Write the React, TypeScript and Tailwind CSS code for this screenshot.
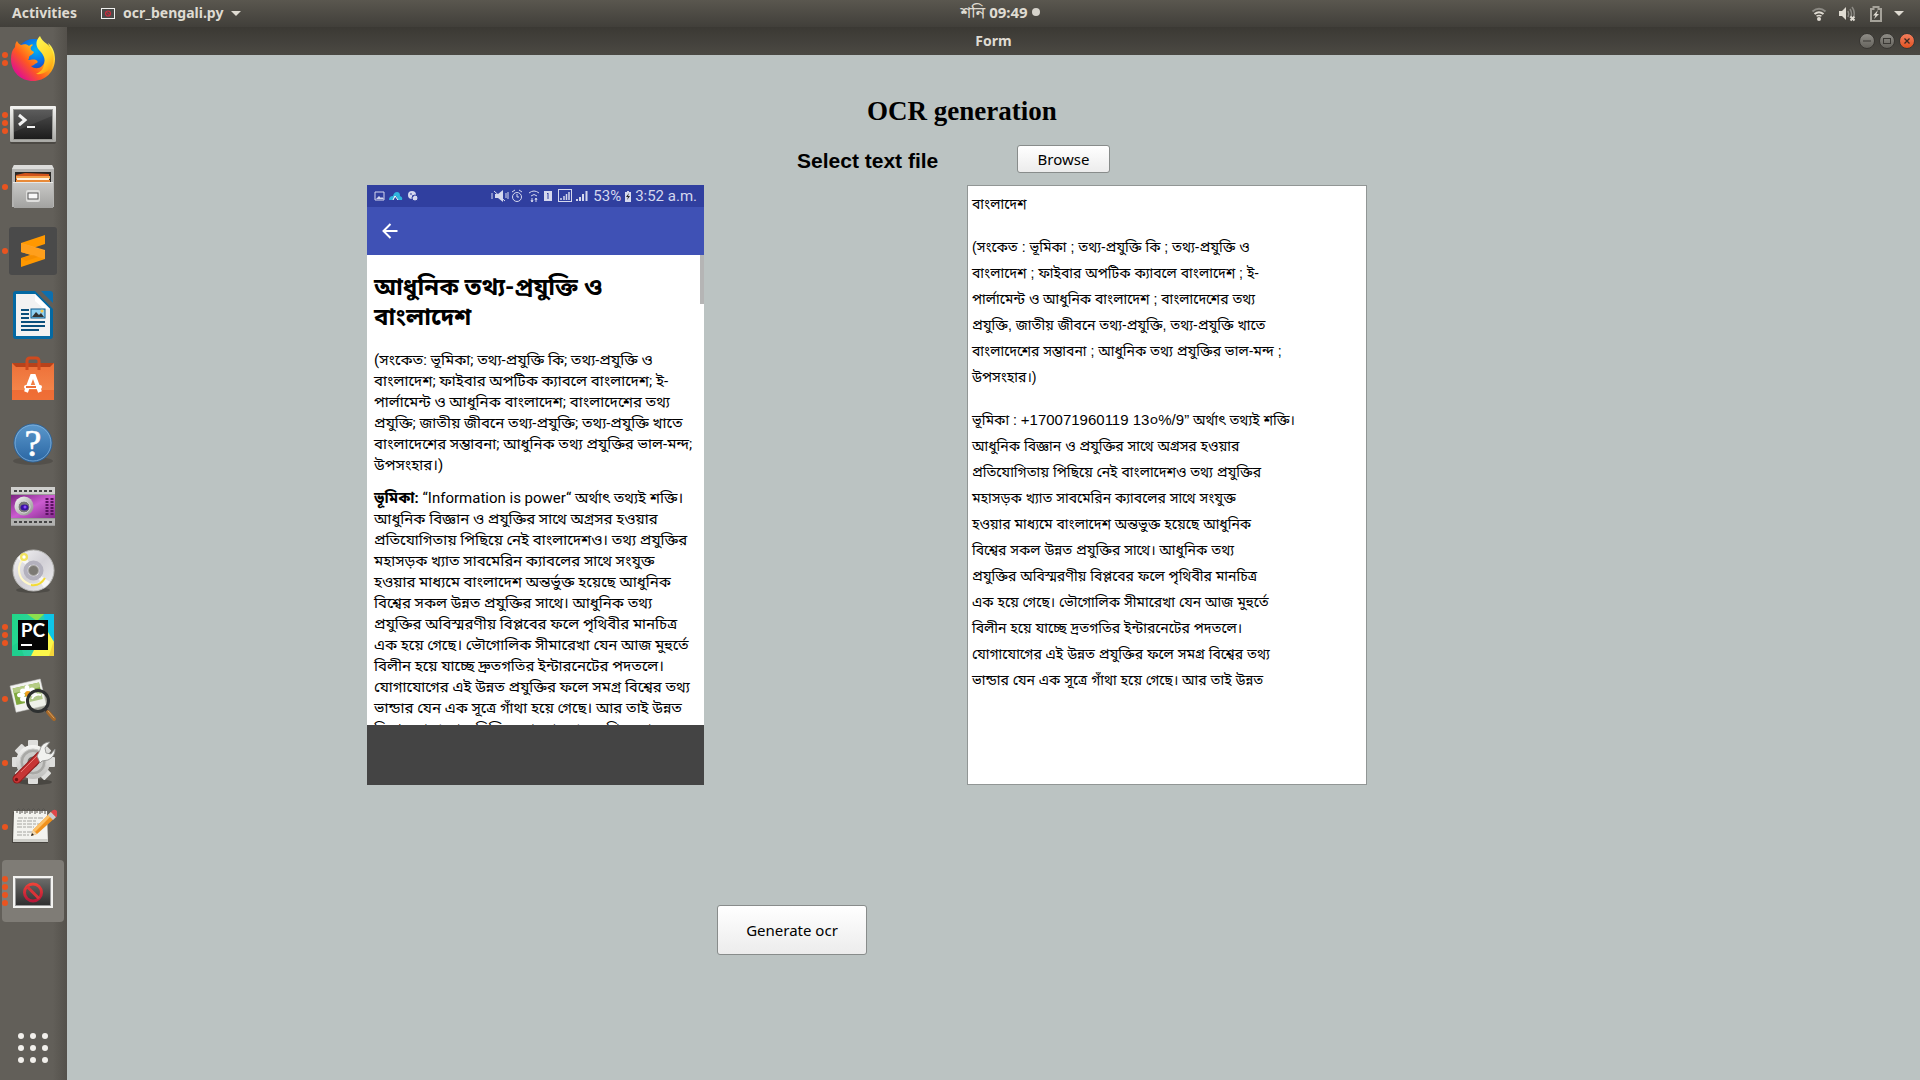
import type { ReactNode } from "react";

const outline = [
  "(সংকেত: ভূমিকা; তথ্য-প্রযুক্তি কি; তথ্য-প্রযুক্তি ও",
  "বাংলাদেশ; ফাইবার অপটিক ক্যাবলে বাংলাদেশ; ই-",
  "পার্লামেন্ট ও আধুনিক বাংলাদেশ; বাংলাদেশের তথ্য",
  "প্রযুক্তি; জাতীয় জীবনে তথ্য-প্রযুক্তি; তথ্য-প্রযুক্তি খাতে",
  "বাংলাদেশের সম্ভাবনা; আধুনিক তথ্য প্রযুক্তির ভাল-মন্দ;",
  "উপসংহার।)",
];

const essay = [
  "আধুনিক বিজ্ঞান ও প্রযুক্তির সাথে অগ্রসর হওয়ার",
  "প্রতিযোগিতায় পিছিয়ে নেই বাংলাদেশও। তথ্য প্রযুক্তির",
  "মহাসড়ক খ্যাত সাবমেরিন ক্যাবলের সাথে সংযুক্ত",
  "হওয়ার মাধ্যমে বাংলাদেশ অন্তর্ভুক্ত হয়েছে আধুনিক",
  "বিশ্বের সকল উন্নত প্রযুক্তির সাথে। আধুনিক তথ্য",
  "প্রযুক্তির অবিস্মরণীয় বিপ্লবের ফলে পৃথিবীর মানচিত্র",
  "এক হয়ে গেছে। ভৌগোলিক সীমারেখা যেন আজ মুহুর্তে",
  "বিলীন হয়ে যাচ্ছে দ্রুতগতির ইন্টারনেটের পদতলে।",
  "যোগাযোগের এই উন্নত প্রযুক্তির ফলে সমগ্র বিশ্বের তথ্য",
  "ভান্ডার যেন এক সূত্রে গাঁথা হয়ে গেছে। আর তাই উন্নত",
  "বিশ্বের সাথে তাল মিলিয়ে বাংলাদেশও এগিয়ে যাচ্ছে",
];

const resultParagraphs: ReactNode[][] = [
  ["বাংলাদেশ"],
  [
    "(সংকেত : ভূমিকা ; তথ্য-প্রযুক্তি কি ; তথ্য-প্রযুক্তি ও",
    "বাংলাদেশ ; ফাইবার অপটিক ক্যাবলে বাংলাদেশ ; ই-",
    "পার্লামেন্ট ও আধুনিক বাংলাদেশ ; বাংলাদেশের তথ্য",
    "প্রযুক্তি, জাতীয় জীবনে তথ্য-প্রযুক্তি, তথ্য-প্রযুক্তি খাতে",
    "বাংলাদেশের সম্ভাবনা ; আধুনিক তথ্য প্রযুক্তির ভাল-মন্দ ;",
    "উপসংহার।)",
  ],
  [
    <>
      ভূমিকা : <span className="text-[15px]">+170071960119 13০%/9”</span> অর্থাৎ তথ্যই শক্তি।
    </>,
    "আধুনিক বিজ্ঞান ও প্রযুক্তির সাথে অগ্রসর হওয়ার",
    "প্রতিযোগিতায় পিছিয়ে নেই বাংলাদেশও তথ্য প্রযুক্তির",
    "মহাসড়ক খ্যাত সাবমেরিন ক্যাবলের সাথে সংযুক্ত",
    "হওয়ার মাধ্যমে বাংলাদেশ অন্তভুক্ত হয়েছে আধুনিক",
    "বিশ্বের সকল উন্নত প্রযুক্তির সাথে। আধুনিক তথ্য",
    "প্রযুক্তির অবিস্মরণীয় বিপ্লবের ফলে পৃথিবীর মানচিত্র",
    "এক হয়ে গেছে। ভৌগোলিক সীমারেখা যেন আজ মুহুর্তে",
    "বিলীন হয়ে যাচ্ছে দ্রতগতির ইন্টারনেটের পদতলে।",
    "যোগাযোগের এই উন্নত প্রযুক্তির ফলে সমগ্র বিশ্বের তথ্য",
    "ভান্ডার যেন এক সূত্রে গাঁথা হয়ে গেছে। আর তাই উন্নত",
  ],
];

function Icon({ children }: { children: ReactNode }) {
  return (
    <svg viewBox="0 0 48 48" className="size-12" aria-hidden="true">
      {children}
    </svg>
  );
}

const firefox = (
  <Icon>
    <defs>
      <radialGradient id="ffGlobe" cx="0.55" cy="0.3" r="0.7">
        <stop offset="0" stopColor="#00b3f4" />
        <stop offset="0.5" stopColor="#0a6ee6" />
        <stop offset="1" stopColor="#312a9c" />
      </radialGradient>
      <linearGradient id="ffBody" x1="0.85" y1="0.1" x2="0.1" y2="0.75">
        <stop offset="0" stopColor="#fff44f" />
        <stop offset="0.35" stopColor="#ffa716" />
        <stop offset="0.65" stopColor="#ff5a1f" />
        <stop offset="1" stopColor="#e31587" />
      </linearGradient>
      <linearGradient id="ffTail" x1="0.3" y1="0" x2="0.7" y2="1">
        <stop offset="0" stopColor="#fff44f" />
        <stop offset="0.6" stopColor="#ffd52a" />
        <stop offset="1" stopColor="#ff980e" />
      </linearGradient>
    </defs>
    <circle cx="25" cy="22" r="18" fill="url(#ffGlobe)" />
    <path
      d="M6 12c0-3 1-5 2-6 1 2 2 3 4 4 3-1 6-1 8 1 1-1 3-2 4-1-2 1-3 3-2 5l3 2c-1 3-4 3-5 5 0 1 0 2-1 3 3 0 5-1 8 0 2 1 2 2 1 3-2 0-3 3-6 3 3 3 8 3 11 0 4-4 4-9 2-14 3 1 6 4 7 9 2-7-1-14-3-18 5 4 7 10 7 16 0 13-10 22-22 22S2 37 2 24c0-5 1-9 4-12z"
      fill="url(#ffBody)"
    />
    <path d="M31 1c-4 4-5 9-1 14 4 4 7 8 5 15-1 5-4 7-8 9 8 1 15-4 17-11 2-9-1-15-6-19-4-3-6-5-7-8z" fill="url(#ffTail)" />
  </Icon>
);

const terminal = (
  <Icon>
    <defs>
      <linearGradient id="termFrame" x1="0" y1="0" x2="0" y2="1">
        <stop offset="0" stopColor="#f4f4f2" />
        <stop offset="1" stopColor="#a9a9a5" />
      </linearGradient>
      <linearGradient id="termScreen" x1="0" y1="0" x2="0" y2="1">
        <stop offset="0" stopColor="#4e4e4e" />
        <stop offset="1" stopColor="#1c1c1c" />
      </linearGradient>
    </defs>
    <rect x="1" y="8" width="46" height="37" rx="2" fill="#3d3b37" opacity="0.6" />
    <rect x="1" y="7" width="46" height="36" rx="1" fill="url(#termFrame)" />
    <rect x="4" y="10" width="40" height="31" fill="#989894" />
    <rect x="5" y="11" width="38" height="29" fill="url(#termScreen)" />
    <path d="M5 11h38v6L5 33z" fill="#fff" opacity="0.08" />
    <path d="M10 16l6 5-6 5" fill="none" stroke="#f2f2f2" strokeWidth="3" />
    <rect x="18" y="27" width="8" height="2" fill="#f2f2f2" />
  </Icon>
);

const files = (
  <Icon>
    <defs>
      <linearGradient id="fileFront" x1="0" y1="0" x2="0" y2="1">
        <stop offset="0" stopColor="#c9c9c7" />
        <stop offset="1" stopColor="#a2a2a0" />
      </linearGradient>
    </defs>
    <path d="M5 2h38l2 4v38H3V6z" fill="#b4b4b2" />
    <path d="M5 2h38l2 4H3z" fill="#dcdcda" />
    <rect x="6" y="9" width="36" height="11" fill="#2b2926" />
    <path d="M7 12l9-2 24 1v9H7z" fill="#d2541c" />
    <rect x="7" y="13" width="34" height="3" fill="#f5a24b" />
    <rect x="8" y="15" width="32" height="2" fill="#fff2df" />
    <rect x="7" y="17" width="34" height="2" fill="#e88a38" />
    <path d="M4 19h40v26H5z" fill="url(#fileFront)" />
    <rect x="4" y="19" width="40" height="1" fill="#e8e8e6" />
    <rect x="17" y="27" width="14" height="12" rx="2" fill="#dededc" />
    <rect x="19" y="30" width="10" height="6" fill="#f8f8f8" stroke="#555" strokeWidth="1" />
  </Icon>
);

const sublime = (
  <Icon>
    <rect width="48" height="48" rx="3" fill="#4a4a4a" />
    <path d="M36 8v9l-15 5-9-2v-4z" fill="#ff9800" />
    <path d="M12 16v9l24 7v-9z" fill="#ffa62e" />
    <path d="M36 24v8L12 40v-9l15-5z" fill="#ff9800" />
    <path d="M12 16l24 8v8l-24-7z" fill="#ff9f1c" />
    <path d="M12 31l13-3 4 2-12 4z" fill="#e68000" opacity="0.4" />
  </Icon>
);

const writer = (
  <Icon>
    <path d="M4 3q0-3 3-3h19l18 18v27q0 3-3 3H7q-3 0-3-3z" fill="#0369a3" />
    <path d="M32 0h9q3 0 3 3v9z" fill="#0d6fae" />
    <path d="M7 3h19l15 15v27H7z" fill="#f2f2f2" />
    <path d="M26 3v7l9 8h6z" fill="#fff" />
    <g fill="#0a4f7c">
      <rect x="12" y="18" width="8" height="2" />
      <rect x="12" y="22" width="8" height="2" />
      <rect x="12" y="26" width="8" height="2" />
      <rect x="12" y="30" width="24" height="2" />
      <rect x="12" y="34" width="24" height="2" />
      <rect x="12" y="38" width="18" height="2" />
    </g>
    <rect x="22" y="18" width="14" height="9" fill="#8fd0f2" stroke="#0a5b8d" />
    <path d="M23 26l4-5 3 3 2-2 3 4z" fill="#333" />
    <circle cx="33" cy="20" r="1.5" fill="#f8c84a" />
  </Icon>
);

const software = (
  <Icon>
    <defs>
      <linearGradient id="bag" x1="0" y1="0" x2="0" y2="1">
        <stop offset="0" stopColor="#ee7038" />
        <stop offset="1" stopColor="#f58c50" />
      </linearGradient>
    </defs>
    <path d="M3 8h42v5H3z" fill="#b8421a" />
    <path d="M3 8l4 4h34l4-4v37H3z" fill="url(#bag)" />
    <rect x="3" y="35" width="42" height="10" fill="#e95420" opacity="0.5" />
    <path d="M18 15V6q0-3 3-3h6q3 0 3 3v9" fill="none" stroke="#cf4a1e" strokeWidth="3" />
    <path d="M17 37l6-16h2l6 16" fill="none" stroke="#fff" strokeWidth="4" />
    <rect x="15" y="30" width="18" height="4" rx="2" fill="#fff" />
    <rect x="17" y="31" width="10" height="2" fill="#ee7038" />
  </Icon>
);

const help = (
  <Icon>
    <defs>
      <linearGradient id="helpBall" x1="0" y1="0" x2="0" y2="1">
        <stop offset="0" stopColor="#5b98cc" />
        <stop offset="1" stopColor="#2a66a3" />
      </linearGradient>
    </defs>
    <ellipse cx="24" cy="42" rx="20" ry="4" fill="#000" opacity="0.15" />
    <circle cx="24" cy="24" r="19" fill="url(#helpBall)" stroke="#2c6298" />
    <circle cx="24" cy="24" r="18" fill="none" stroke="#8db9df" strokeWidth="0.7" />
    <text x="24" y="37" textAnchor="middle" fontFamily="Liberation Serif, serif" fontSize="38" fill="#fff" stroke="#fff" strokeWidth="0.6">?</text>
  </Icon>
);

const kazam = (
  <Icon>
    <defs>
      <linearGradient id="film" x1="0" y1="0" x2="1" y2="1">
        <stop offset="0" stopColor="#7b2481" />
        <stop offset="0.5" stopColor="#cb5bd0" />
        <stop offset="1" stopColor="#852a8d" />
      </linearGradient>
      <linearGradient id="steel" x1="0" y1="0" x2="1" y2="1">
        <stop offset="0" stopColor="#fafafa" />
        <stop offset="1" stopColor="#8a8a88" />
      </linearGradient>
    </defs>
    <rect x="2" y="4" width="44" height="39" fill="#9b9b99" />
    <rect x="2" y="4" width="44" height="7" fill="#cfcfcd" />
    <rect x="2" y="36" width="44" height="6" fill="#b2b2b0" />
    <path d="M5 8h38M5 39h38" stroke="#444" strokeWidth="2" strokeDasharray="3 2" />
    <rect x="2" y="12" width="44" height="23" fill="url(#film)" />
    <path d="M38 15v17M43 15v17" stroke="#5a1261" strokeWidth="3" strokeDasharray="2 1" />
    <circle cx="15" cy="23" r="9.5" fill="url(#steel)" />
    <circle cx="15" cy="24" r="6" fill="#787878" stroke="#ddd" />
    <ellipse cx="15.500" cy="24.500" rx="4" ry="3" fill="#3a11a0" />
    <circle cx="16" cy="24" r="1.5" fill="#8a4dff" />
  </Icon>
);

const disc = (
  <Icon>
    <defs>
      <linearGradient id="cd" x1="0" y1="0" x2="1" y2="1">
        <stop offset="0" stopColor="#f7f7f7" />
        <stop offset="0.5" stopColor="#d2d0d6" />
        <stop offset="1" stopColor="#efefef" />
      </linearGradient>
    </defs>
    <ellipse cx="24" cy="43" rx="17" ry="3" fill="#000" opacity="0.2" />
    <circle cx="24.500" cy="23.500" r="20.500" fill="url(#cd)" stroke="#b9b9b7" />
    <path d="M24 23L8 11a20 20 0 0 1 7-5zM25 24l16 11a20 20 0 0 1-6 6z" fill="#fff" opacity="0.7" />
    <circle cx="24.500" cy="23.500" r="8" fill="none" stroke="#b3b1bd" strokeWidth="4" />
    <path d="M13 13c-6 9-3 20 7 24 6 2 12-1 16-6" fill="none" stroke="#fff8c9" strokeWidth="2" />
    <path d="M22 38c6 1 11-2 14-7" fill="none" stroke="#f2da36" strokeWidth="2" />
    <circle cx="15" cy="10" r="4" fill="#f1e03a" opacity="0.8" />
    <circle cx="15" cy="10" r="1.700" fill="#fff" />
    <circle cx="24.500" cy="23.500" r="5" fill="#7c7a74" stroke="#a9a8a4" />
  </Icon>
);

const pycharm = (
  <Icon>
    <defs>
      <linearGradient id="pcBack" x1="0" y1="0.2" x2="1" y2="0.5">
        <stop offset="0" stopColor="#21d789" />
        <stop offset="0.6" stopColor="#2ed2a2" />
        <stop offset="1" stopColor="#07c3f2" />
      </linearGradient>
    </defs>
    <rect x="3" y="3" width="42" height="42" fill="url(#pcBack)" />
    <path d="M18 3h17l-7 7z" fill="#8be04e" />
    <path d="M35 3h10v20l-9-11z" fill="#0ec5e8" />
    <path d="M36 16l9 15v14H22l4-8z" fill="#fcf84a" />
    <path d="M3 35l7-4 5 14H3z" fill="#1fcf8e" />
    <path d="M45 29v16h-5z" fill="#f4d53a" />
    <rect x="9" y="9" width="30" height="30" fill="#050505" />
    <text x="24" y="26" textAnchor="middle" fontFamily="Lato, sans-serif" fontWeight="700" fontSize="19" fill="#fff">PC</text>
    <rect x="12" y="33" width="11" height="2" fill="#fff" />
  </Icon>
);

const viewer = (
  <Icon>
    <g transform="rotate(-13 20 22)">
      <rect x="4" y="7" width="31" height="27" fill="#f2f2f0" stroke="#c4c4c2" strokeWidth="0.5" />
      <rect x="6" y="10" width="27" height="17" fill="#80a83e" />
      <rect x="6" y="10" width="27" height="5" fill="#b5cc84" />
    </g>
    <g fill="#fff">
      <ellipse cx="18" cy="14" rx="2.500" ry="4" />
      <ellipse cx="18" cy="25" rx="2.500" ry="4" />
      <ellipse cx="12" cy="20" rx="4" ry="2.500" />
      <ellipse cx="24" cy="19" rx="4" ry="2.500" />
      <ellipse cx="14" cy="16" rx="3" ry="2.500" />
      <ellipse cx="23" cy="15" rx="3" ry="2.500" />
      <ellipse cx="14" cy="24" rx="3" ry="2.500" />
    </g>
    <circle cx="19" cy="19" r="3" fill="#f1a01e" />
    <circle cx="29" cy="26" r="10.500" fill="#e9efdf" fillOpacity="0.45" stroke="#2d3030" strokeWidth="3" />
    <path d="M23 24a7 7 0 0 1 9-4" fill="none" stroke="#fff" strokeWidth="2" />
    <path d="M36 34l3 3" stroke="#333" strokeWidth="3" />
    <path d="M39 37l6 7" stroke="#a5682a" strokeWidth="4" strokeLinecap="round" />
    <path d="M39 36l6 7" stroke="#d9a25e" strokeWidth="1" strokeLinecap="round" />
  </Icon>
);

const settings = (
  <Icon>
    <defs>
      <linearGradient id="gear" x1="0" y1="0" x2="0" y2="1">
        <stop offset="0" stopColor="#f5f5f3" />
        <stop offset="1" stopColor="#bdbdbb" />
      </linearGradient>
    </defs>
    <ellipse cx="26" cy="43" rx="17" ry="3" fill="#000" opacity="0.25" />
    <g fill="#dededc">
      <rect x="19" y="1" width="10" height="44" rx="1" />
      <rect x="3" y="18" width="43" height="10" rx="1" />
      <rect x="19" y="2" width="10" height="42" rx="1" transform="rotate(45 24 23)" />
      <rect x="19" y="2" width="10" height="42" rx="1" transform="rotate(-45 24 23)" />
      <circle cx="24" cy="23" r="17" fill="url(#gear)" />
    </g>
    <circle cx="24" cy="23" r="13" fill="#a9a9a6" stroke="#c9c9c7" />
    <circle cx="24" cy="23" r="10" fill="#cbcbc9" />
    <circle cx="24" cy="23" r="5.500" fill="#6b6964" />
    <path d="M8 40L31 17" stroke="#8e1a1a" strokeWidth="9" strokeLinecap="round" />
    <path d="M8 40L31 17" stroke="#c73535" strokeWidth="7" strokeLinecap="round" />
    <path d="M12 33L28 17" stroke="#e47a76" strokeWidth="1" />
    <path d="M28 17l3-6c1-5 5-8 10-8l-5 6 1 5 5 1 4-5c0 6-3 9-7 11l-6 1-2 2z" fill="#f1f1ef" stroke="#8c8c8a" strokeWidth="0.8" />
    <circle cx="7.500" cy="40.500" r="1.700" fill="#6f1414" />
  </Icon>
);

const gedit = (
  <Icon>
    <path d="M4 9h34l1 31H3z" fill="#33312d" opacity="0.6" />
    <path d="M5 8h33l1 31H4z" fill="#f3f3ef" />
    <path d="M4 36h35v3H4z" fill="#cfcfca" />
    <path d="M9 15h26M8 18h19M8 21h24M8 24h17M8 29h15M8 32h12" stroke="#a5a5a0" strokeWidth="1" strokeDasharray="5 1 3 1" />
    <path d="M8 10V7q1.500-3 3 0v4M13 10V7q1.500-3 3 0v4M18 10V7q1.500-3 3 0v4M23 10V7q1.500-3 3 0v4M28 10V7q1.500-3 3 0v4M33 10V7q1.500-3 3 0v4" fill="none" stroke="#55534f" strokeWidth="1" />
    <path d="M22 33l2-6L42 9l5 5-19 17z" fill="#f0921e" />
    <path d="M24 27L42 9l2 2-18 18z" fill="#fbc067" />
    <path d="M22 33l2-6 4 4z" fill="#f0d7ae" />
    <path d="M22 33l1-3 2 2z" fill="#222" />
    <path d="M39 12l3-3 5 5-3 3z" fill="#c9ccd2" />
    <path d="M42 9q3-4 6-1t-1 6z" fill="#e0474b" />
  </Icon>
);

const blocked = (
  <Icon>
    <defs>
      <linearGradient id="blk" x1="0" y1="0" x2="0" y2="1">
        <stop offset="0" stopColor="#6b6b69" />
        <stop offset="1" stopColor="#303030" />
      </linearGradient>
      <linearGradient id="blkRed" x1="0" y1="0" x2="0" y2="1">
        <stop offset="0" stopColor="#ee4238" />
        <stop offset="1" stopColor="#b81638" />
      </linearGradient>
    </defs>
    <rect x="4" y="9" width="40" height="32" fill="#f3f3f1" />
    <rect x="6" y="11" width="36" height="28" fill="#999" />
    <rect x="7" y="12" width="34" height="26" fill="url(#blk)" />
    <circle cx="24" cy="25.500" r="8.500" fill="none" stroke="url(#blkRed)" strokeWidth="3" />
    <path d="M18 19.500l12 12" stroke="#d93338" strokeWidth="3" />
  </Icon>
);

const dockItems: { name: string; icon: ReactNode; windows: number; active?: boolean }[] = [
  { name: "Firefox", icon: firefox, windows: 2 },
  { name: "Terminal", icon: terminal, windows: 3 },
  { name: "Files", icon: files, windows: 1 },
  { name: "Sublime Text", icon: sublime, windows: 1 },
  { name: "LibreOffice Writer", icon: writer, windows: 0 },
  { name: "Ubuntu Software", icon: software, windows: 0 },
  { name: "Help", icon: help, windows: 0 },
  { name: "Kazam", icon: kazam, windows: 0 },
  { name: "Brasero", icon: disc, windows: 0 },
  { name: "PyCharm", icon: pycharm, windows: 3 },
  { name: "Image Viewer", icon: viewer, windows: 1 },
  { name: "Settings", icon: settings, windows: 1 },
  { name: "Text Editor", icon: gedit, windows: 1 },
  { name: "ocr_bengali.py", icon: blocked, windows: 4, active: true },
];

function TopBar() {
  return (
    <header className="grid h-[27px] grid-cols-[1fr_auto_1fr] items-center bg-gradient-to-b from-[#5a574f] to-[#413f3a] text-[14px] font-bold leading-5 text-[#dfdbd2]">
      <div className="flex items-center gap-6 pb-px pl-3">
        <button type="button">Activities</button>
        <button type="button" className="flex items-center gap-2">
          <svg viewBox="0 0 14 11" className="h-[11px] w-[14px]" aria-hidden="true">
            <rect x="0.500" y="0.500" width="13" height="10" fill="#4a4a48" stroke="#f0f0ee" />
            <circle cx="7" cy="5.500" r="2.500" fill="none" stroke="#cf2a3c" strokeWidth="1.200" />
            <path d="M5.500 4l3 3" stroke="#cf2a3c" />
          </svg>
          <span>ocr_bengali.py</span>
          <svg viewBox="0 0 10 5" className="h-[5px] w-[10px]" aria-hidden="true">
            <path d="M0 0h10L5 5z" fill="#dfdbd2" />
          </svg>
        </button>
      </div>
      <button type="button" className="flex items-center gap-1 pb-[3px] pl-20 text-[15px]">
        <span className="text-[16px] font-normal">শনি</span>
        <span>09:49</span>
        <span className="size-2 rounded-full bg-[#d6d3cb]" />
      </button>
      <button type="button" aria-label="System menu" className="flex items-center gap-3 justify-self-end pr-4">
        <svg viewBox="0 0 16 16" className="size-4" fill="none" aria-hidden="true">
          <path d="M1.500 5.500q6.500-5.500 13 0" stroke="#8b8983" strokeWidth="2" />
          <path d="M3.500 8q4.500-3.500 9 0" stroke="#dfdbd2" strokeWidth="2" />
          <path d="M5.500 10.200q2.500-1.600 5 0" stroke="#dfdbd2" strokeWidth="1.500" />
          <circle cx="8" cy="13" r="2" fill="#dfdbd2" />
        </svg>
        <svg viewBox="0 0 17 16" className="h-4 w-[17px]" fill="none" aria-hidden="true">
          <path d="M0 5h3l4-4v13l-4-4H0z" fill="#dfdbd2" />
          <path d="M9 5q1.500 3 0 6M11 3q3 5 0 9M13 1q3 4 2 9" stroke="#8b8983" strokeWidth="1.500" />
          <path d="M11.500 10.500l4 4m0-4l-4 4" stroke="#dfdbd2" strokeWidth="2" />
        </svg>
        <svg viewBox="0 0 12 16" className="ml-0.5 h-4 w-3" fill="none" aria-hidden="true">
          <path d="M1 3h2.500V1h5v2H11v12H1z" stroke="#a5a29a" strokeWidth="2" />
          <path d="M8 4L3 9.500h2.500L4 13l5-5H6.500z" fill="#dfdbd2" />
        </svg>
        <svg viewBox="0 0 10 5" className="h-[5px] w-[10px]" aria-hidden="true">
          <path d="M0 0h10L5 5z" fill="#dfdbd2" />
        </svg>
      </button>
    </header>
  );
}

function Dock() {
  return (
    <nav aria-label="Dock" className="flex w-[67px] shrink-0 flex-col border-r border-[#55514c] bg-[linear-gradient(to_right,#625f59_0%,#625f59_80%,#55524c_100%)]">
      {dockItems.map((item) => (
        <button key={item.name} type="button" aria-label={item.name} className="flex h-16 w-full items-center">
          <span className={item.active ? "ml-[2px] flex h-[62px] w-[62px] items-center rounded bg-[#7f7c76]" : "ml-[2px] flex h-[62px] w-[62px] items-center"}>
            <span className="flex w-[7px] shrink-0 flex-col items-start gap-[2px]">
              {Array.from({ length: item.windows }, (_, i) => (
                <span key={i} className="size-[6px] rounded-full bg-[#e95420]" />
              ))}
            </span>
            {item.icon}
          </span>
        </button>
      ))}
      <button type="button" aria-label="Show Applications" className="mt-auto mb-[16px] flex h-8 w-full justify-center pr-px">
        <svg viewBox="0 0 32 32" className="size-8" fill="#f2f0ec" aria-hidden="true">
          {[4, 16, 28].map((y) => [4, 16, 28].map((x) => <circle key={`${x}-${y}`} cx={x} cy={y} r="3" />))}
        </svg>
      </button>
    </nav>
  );
}

function TitleBar() {
  const round = "flex size-4 items-center justify-center rounded-full border border-[#393733]";
  return (
    <div className="grid h-7 grid-cols-[1fr_auto_1fr] items-center bg-gradient-to-b from-[#3b3934] to-[#4b4943] text-[14px] font-bold leading-5 text-[#dfdbd2]">
      <span />
      <h1 className="pb-px">Form</h1>
      <div className="flex gap-1 justify-self-end pr-[5px]">
        <button type="button" aria-label="Minimize" className={`${round} bg-gradient-to-b from-[#8f8d87] to-[#65635d]`}>
          <svg viewBox="0 0 8 8" className="size-2" aria-hidden="true">
            <path d="M0 4h8" stroke="#3a3834" />
          </svg>
        </button>
        <button type="button" aria-label="Maximize" className={`${round} bg-gradient-to-b from-[#8f8d87] to-[#65635d]`}>
          <svg viewBox="0 0 8 8" className="size-2" aria-hidden="true">
            <rect x="0.500" y="1.500" width="7" height="5" fill="none" stroke="#3a3834" />
          </svg>
        </button>
        <button type="button" aria-label="Close" className={`${round} bg-gradient-to-b from-[#f37e5c] to-[#e2511d]`}>
          <svg viewBox="0 0 8 8" className="size-2" aria-hidden="true">
            <path d="M1.500 1.500l5 5m0-5l-5 5" stroke="#3a2a22" strokeWidth="1.300" />
          </svg>
        </button>
      </div>
    </div>
  );
}

function PhonePreview() {
  return (
    <section aria-label="Selected image" className="flex h-[600px] w-[337px] flex-col overflow-hidden bg-white font-[Roboto,'Noto_Sans_Bengali',sans-serif] text-black">
      <div className="flex h-[22px] shrink-0 items-center justify-between bg-[#303f9f] px-[7px] text-[15px] text-[#d5d8ee]">
        <svg viewBox="0 0 46 12" className="h-3 w-[46px]" fill="none" aria-hidden="true">
          <path d="M1 2h9v8H1z" stroke="#d5d8ee" />
          <path d="M2 9l3-3 2 2 1-1 2 2z" fill="#d5d8ee" />
          <path d="M15 10q0-4 4-4 1-4 4-4t3 4q3 1 2 4h-4l-2-4-3 4z" fill="#2fb4dc" />
          <path d="M19 10l2-4 3 4" stroke="#fff" />
          <circle cx="38" cy="5" r="4" fill="#d5d8ee" />
          <circle cx="41" cy="8" r="3" fill="#d5d8ee" stroke="#303f9f" />
          <path d="M36 4h2M38 6h2" stroke="#303f9f" />
        </svg>
        <div className="flex items-center gap-1">
          <svg viewBox="0 0 98 14" className="h-[14px] w-[98px]" fill="none" stroke="#d5d8ee" aria-hidden="true">
            <path d="M4 5h3l5-4v12L7 9H4z" fill="#d5d8ee" stroke="none" />
            <path d="M3 2l11 10M1 4v6M15 4v5M17 3v7" />
            <circle cx="26" cy="8" r="4.500" />
            <path d="M26 5v3h2M21 3l3-2M31 3l-3-2" />
            <path d="M38 4q5-4 10 0M40 7q3-3 6 0M41 9v4M45 9v4M40 11l1 2 1-2M44 11l1-2 1 2" />
            <rect x="53" y="2" width="8" height="10" fill="#d5d8ee" stroke="none" />
            <path d="M56 5l1-1v6" stroke="#303f9f" />
            <rect x="67.500" y="0.500" width="13" height="12" />
            <path d="M70 11V9M73 11V7M75.500 11V5M78 11V3" strokeWidth="1.500" />
            <path d="M86 12v-2M89 12V8M92 12V5M95.500 12V2" strokeWidth="2" />
          </svg>
          <span>53%</span>
          <svg viewBox="0 0 6 11" className="h-[11px] w-[6px]" aria-hidden="true">
            <path d="M0 1h2V0h2v1h2v10H0z" fill="#d5d8ee" />
            <path d="M4 2L1 6h2l-1 3 3-4H3z" fill="#222" />
          </svg>
          <span>3:52 a.m.</span>
        </div>
      </div>
      <div className="flex h-12 shrink-0 items-center bg-[#3f51b5] pl-[15px]">
        <button type="button" aria-label="Back">
          <svg viewBox="0 0 16 16" className="size-4" fill="none" stroke="#fff" strokeWidth="2" aria-hidden="true">
            <path d="M15.500 8H2M8.500 1L1.500 8l7 7" />
          </svg>
        </button>
      </div>
      <div className="flex h-[470px] shrink-0 overflow-hidden pl-[7px]">
        <article className="min-w-0 flex-1 whitespace-nowrap pt-[17px] text-[15px] leading-[21px]">
          <h2 className="text-[24px] font-bold leading-[30px]">
            আধুনিক তথ্য-প্রযুক্তি ও
            <br />
            বাংলাদেশ
          </h2>
          <p className="mt-[18px]">
            {outline.map((line) => (
              <span key={line} className="block">{line}</span>
            ))}
          </p>
          <p className="mt-3">
            <span className="block">
              <b>ভূমিকা:</b> “Information is power“ অর্থাৎ তথ্যই শক্তি।
            </span>
            {essay.map((line) => (
              <span key={line} className="block">{line}</span>
            ))}
          </p>
        </article>
        <div className="h-[49px] w-1 bg-[#b5b5b5]" />
      </div>
      <div className="flex-1 bg-[#444444]" />
    </section>
  );
}

function ResultBox() {
  return (
    <div
      role="textbox"
      aria-multiline="true"
      aria-label="Recognised text"
      tabIndex={0}
      className="flex h-[600px] w-[400px] flex-col gap-[17px] overflow-hidden whitespace-nowrap border border-[#919695] bg-white px-1 pt-[5px] font-['Liberation_Sans','Noto_Sans_Bengali',sans-serif] text-[14px] leading-[26px] text-black"
    >
      {resultParagraphs.map((lines, p) => (
        <p key={p}>
          {lines.map((line, i) => (
            <span key={i} className="block">{line}</span>
          ))}
        </p>
      ))}
    </div>
  );
}

export default function App() {
  const push = "rounded-[3px] border border-[#888c8b] bg-gradient-to-b from-white to-[#ececec] text-[15px] text-black";
  return (
    <div className="flex min-h-screen flex-col bg-[#bbc3c2] font-['Noto_Sans','Noto_Sans_Bengali',sans-serif]">
      <TopBar />
      <div className="flex flex-1">
        <Dock />
        <div className="flex min-w-0 flex-1 flex-col">
          <TitleBar />
          <main className="flex flex-col items-start pl-[300px]">
            <h2 className="mt-10 ml-[500px] font-['Liberation_Serif',serif] text-[27px] font-bold leading-8 text-black">OCR generation</h2>
            <div className="mt-[18px] ml-[430px] flex items-center">
              <label htmlFor="browse" className="w-[220px] pt-1 font-['Liberation_Sans',sans-serif] text-[21px] font-bold leading-6 text-black">
                Select text file
              </label>
              <button id="browse" type="button" className={`${push} h-7 w-[93px]`}>Browse</button>
            </div>
            <div className="mt-3 flex gap-[263px]">
              <PhonePreview />
              <ResultBox />
            </div>
            <button type="button" className={`${push} mt-[120px] ml-[350px] h-[50px] w-[150px]`}>Generate ocr</button>
          </main>
        </div>
      </div>
    </div>
  );
}
